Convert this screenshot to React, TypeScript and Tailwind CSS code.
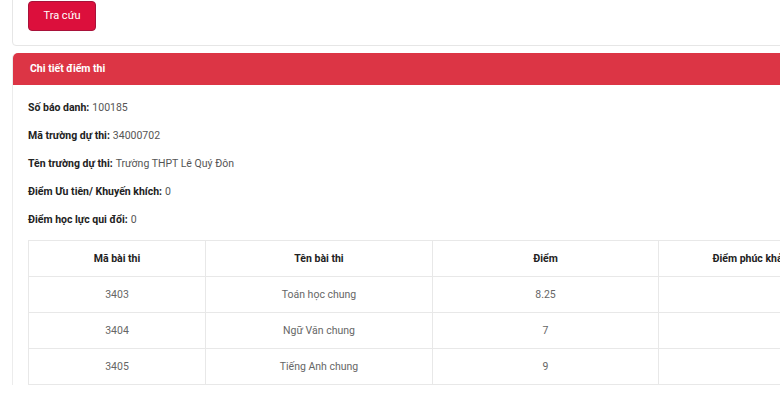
const INFO: { label: string; value: string }[] = [
  { label: 'Số báo danh:', value: '100185' },
  { label: 'Mã trường dự thi:', value: '34000702' },
  { label: 'Tên trường dự thi:', value: 'Trường THPT Lê Quý Đôn' },
  { label: 'Điểm Ưu tiên/ Khuyến khích:', value: '0' },
  { label: 'Điểm học lực qui đổi:', value: '0' },
];

const ROWS = [
  { code: '3403', name: 'Toán học chung', score: '8.25' },
  { code: '3404', name: 'Ngữ Văn chung', score: '7' },
  { code: '3405', name: 'Tiếng Anh chung', score: '9' },
];

export default function App() {
  return (
    <div
      className="h-[394px] w-[780px] overflow-hidden bg-white"
      style={{ fontFamily: 'Roboto, "Noto Sans", Arial, sans-serif' }}
    >
      <div className="ml-[12px] w-[840px]">
        {/* search card */}
        <div className="-mt-[16px] rounded-b border border-[#e6e6e6] pb-[14px] pl-[15px] pt-[16px]">
          <button className="h-[30px] w-[68px] rounded-[4px] border border-[#a8123a] bg-[#dc0f3c] text-[11px] text-white">
            Tra cứu
          </button>
        </div>

        {/* result card */}
        <div className="mt-[7px] rounded-t-[5px] border-l border-[#ececec]">
          <div className="flex h-[32px] items-center rounded-t-[5px] bg-[#dc3545] pl-[17px] text-[10.5px] font-bold text-white">
            Chi tiết điểm thi
          </div>
          <div className="pl-[15px] pt-[9px]">
            {INFO.map((it) => (
              <div key={it.label} className="flex h-[28px] items-center text-[10.5px]">
                <span className="font-bold text-[#222]">{it.label}</span>
                <span className="ml-[3px] text-[#555]">{it.value}</span>
              </div>
            ))}

            <table className="mt-[6px] border-collapse text-[10.5px]">
              <thead>
                <tr className="h-[36px]">
                  <th className="w-[177px] border border-[#e8e8e8] font-bold text-[#222]">Mã bài thi</th>
                  <th className="w-[227px] border border-[#e8e8e8] font-bold text-[#222]">Tên bài thi</th>
                  <th className="w-[226px] border border-[#e8e8e8] font-bold text-[#222]">Điểm</th>
                  <th className="w-[184px] border border-[#e8e8e8] font-bold text-[#222]">Điểm phúc khảo</th>
                </tr>
              </thead>
              <tbody>
                {ROWS.map((r) => (
                  <tr key={r.code} className="h-[36px] text-center text-[#666]">
                    <td className="border border-[#e8e8e8]">{r.code}</td>
                    <td className="border border-[#e8e8e8]">{r.name}</td>
                    <td className="border border-[#e8e8e8]">{r.score}</td>
                    <td className="border border-[#e8e8e8]"></td>
                  </tr>
                ))}
              </tbody>
            </table>
          </div>
        </div>
      </div>
    </div>
  );
}
